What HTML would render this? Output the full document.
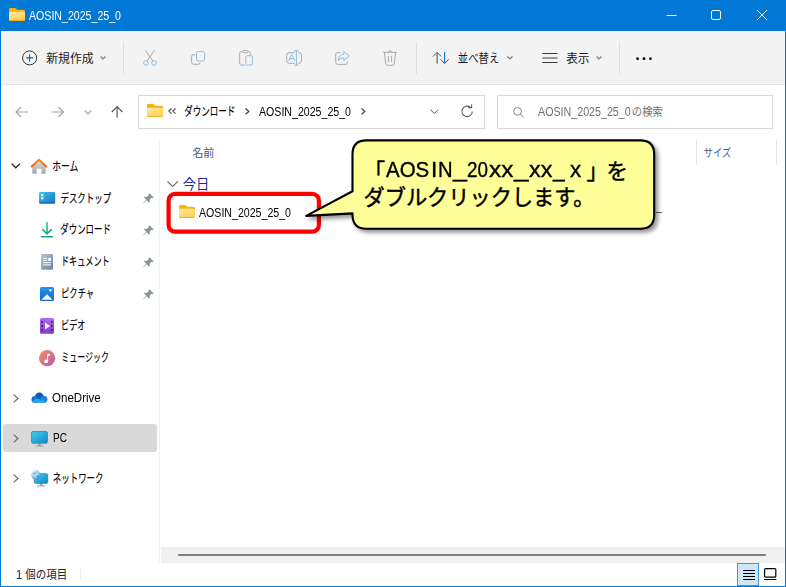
<!DOCTYPE html>
<html lang="ja"><head><meta charset="utf-8"><title>AOSIN_2025_25_0</title>
<style>
html,body{margin:0;padding:0;background:#fff;}
body{width:786px;height:587px;overflow:hidden;font-family:"Liberation Sans",sans-serif;font-size:12px;color:#000;}
#win{position:relative;width:786px;height:587px;overflow:hidden;background:#fff;}
#win *{box-sizing:border-box;}
.abs{position:absolute;}
#jp{position:absolute;left:0;top:0;pointer-events:none;}
#jp text{font-family:"Liberation Sans","Noto Sans CJK JP",sans-serif;white-space:pre;}
.t{position:absolute;white-space:nowrap;line-height:1;transform-origin:0 0;}
#titlebar{position:absolute;left:0;top:0;width:786px;height:31px;background:#0078d4;}
#bl{position:absolute;left:0;top:0;width:1px;height:587px;background:#0078d4;}
#br{position:absolute;left:785px;top:0;width:1px;height:587px;background:#0078d4;}
#bb{position:absolute;left:0;top:586px;width:786px;height:1px;background:#0078d4;}
#toolbar{position:absolute;left:1px;top:31px;width:784px;height:54px;background:#f3f3f3;border-bottom:1px solid #e3e3e3;}
.sep{position:absolute;width:1px;background:#dedede;top:42px;height:32px;}
.box{position:absolute;top:95px;height:34px;border:1px solid #d9d9d9;background:#fff;}
#sidediv{position:absolute;left:159px;top:140px;width:1px;height:423px;background:#f2f2f2;}
#pcsel{position:absolute;left:3px;top:424px;width:154px;height:28px;background:#d9d9d9;border-radius:2.5px;}
.colsep{position:absolute;top:140px;width:1px;height:25px;background:#e5e5e5;}
#redbox{position:absolute;left:166.5px;top:191.8px;width:154.5px;height:42px;border:4.2px solid #ff0000;border-radius:9px;}
#track{position:absolute;left:161px;top:547px;width:624px;height:16px;background:#f0f0f0;}
#thumb{position:absolute;left:178px;top:554px;width:588px;height:2px;background:#7f7f7f;border-radius:1px;}
#detbtn{position:absolute;left:737px;top:563px;width:22px;height:23px;background:#cfe6f7;border:1px solid #3a9ce0;}
svg.ic{position:absolute;overflow:visible;}

</style></head>
<body>
<div id="win">
<div id="titlebar"></div><div id="toolbar"></div><div id="bl"></div><div id="br"></div><div id="bb"></div><svg class="ic" style="left:9px;top:8px" width="16" height="13" viewBox="0 0 16 13"><defs><linearGradient id="f1" x1="0" y1="0" x2="0.6" y2="1"><stop offset="0" stop-color="#ffe9a6"/><stop offset="1" stop-color="#ffd052"/></linearGradient></defs>
<path d="M0 1.3Q0 0 1.3 0H5.8Q6.5 0 7 .5L8.4 1.8H14.7Q16 1.8 16 3.1V6H0Z" fill="#f6b30b"/>
<path d="M0 5Q0 3.8 1.2 3.8H14.8Q16 3.8 16 5V11.7Q16 13 14.7 13H1.3Q0 13 0 11.7Z" fill="url(#f1)"/>
<path d="M0 11.4V11.7Q0 13 1.3 13H14.7Q16 13 16 11.7V11.4Q16 12.3 14.7 12.3H1.3Q0 12.3 0 11.4Z" fill="#eaa714"/></svg><span class="t" style="left:29.3px;top:9.84px;font-size:12px;color:#fff;transform:scaleX(0.8839);">AOSIN_2025_25_0</span><svg class="ic" style="left:660px;top:5px" width="120" height="20" viewBox="0 0 120 20"><g fill="none" stroke="#fff" stroke-width="1">
<path d="M6.5 10.5H16.5"/>
<rect x="51.5" y="5.5" width="9" height="9" rx="1.5"/>
<path d="M97 5L107 15M107 5L97 15"/></g></svg><svg class="ic" style="left:22px;top:50px" width="16" height="16" viewBox="0 0 16 16"><circle cx="7.6" cy="7.9" r="7" fill="none" stroke="#333" stroke-width="1"/><path d="M7.6 4.4V11.4M4.1 7.9H11.1" stroke="#0067c0" stroke-width="1.1" fill="none"/></svg><svg class="ic" style="left:100px;top:56.3px" width="7" height="4" viewBox="0 0 7 4"><path d="M0.5 0.5L3 3L5.5 0.5" fill="none" stroke="#777" stroke-width="1.1"/></svg><div class="sep" style="left:123px"></div><div class="sep" style="left:416px"></div><div class="sep" style="left:619px"></div><svg class="ic" style="left:142px;top:50px" width="16" height="16" viewBox="0 0 16 16"><g fill="none" stroke-width="1"><path d="M3.2 0.2L10.8 11M12.6 0.2L5 11" stroke="#a9a9a9"/><circle cx="3.9" cy="13" r="2.3" stroke="#8cc0ea"/><circle cx="12" cy="13" r="2.3" stroke="#8cc0ea"/></g></svg><svg class="ic" style="left:190px;top:50px" width="16" height="16" viewBox="0 0 16 16"><g fill="none" stroke-width="1"><path d="M5 4.6H3.6Q1.6 4.6 1.6 6.6V12.3Q1.6 14.3 3.6 14.3H8Q10 14.3 10 12.6" stroke="#a9a9a9"/><rect x="6.5" y="1.5" width="8.1" height="9.6" rx="2" stroke="#8cc0ea"/></g></svg><svg class="ic" style="left:238px;top:50px" width="16" height="16" viewBox="0 0 16 16"><g fill="none" stroke-width="1"><path d="M7 15.1H3.7Q1.7 15.1 1.7 13.1V3.5Q1.7 1.5 3.7 1.5H4.5M10 1.5H10.9Q12.4 1.5 12.4 3.5V5" stroke="#a9a9a9"/><rect x="4.6" y="0.4" width="5.2" height="2.3" rx="1.1" stroke="#a9a9a9"/><rect x="7.8" y="5.7" width="6.6" height="9.4" rx="1.5" stroke="#8cc0ea"/></g></svg><svg class="ic" style="left:286px;top:50px" width="17" height="16" viewBox="0 0 17 16"><g fill="none" stroke-width="1"><path d="M8.6 2.6H3.2Q0.7 2.6 0.7 5.1V10.8Q0.7 13.3 3.2 13.3H8.6M12.2 2.6H13Q15.5 2.6 15.5 5.1V10.8Q15.5 13.3 13 13.3H12.2" stroke="#a9a9a9"/><path d="M8.4 0.6H12.4M8.4 15.3H12.4M10.4 0.6V15.3" stroke="#8cc0ea" stroke-width="1.1"/><path d="M2.7 10.8L5.7 4.3L8.7 10.8M3.8 8.6H7.6" stroke="#8cc0ea"/></g></svg><svg class="ic" style="left:334px;top:50px" width="16" height="16" viewBox="0 0 16 16"><g fill="none" stroke-width="1"><path d="M6.5 2.6H3.7Q1.7 2.6 1.7 4.6V12.4Q1.7 14.4 3.7 14.4H11.6Q13.6 14.4 13.6 12.4V11.6" stroke="#a9a9a9"/><path d="M9.8 1.5L15.3 6L9.8 10.4V7.9Q6.2 7.7 4.3 10.6Q4.7 4.5 9.8 4Z" stroke="#8cc0ea" stroke-linejoin="round"/></g></svg><svg class="ic" style="left:382px;top:50px" width="16" height="16" viewBox="0 0 16 16"><g fill="none" stroke-width="1" stroke="#a9a9a9"><path d="M1 2.3H15M6.6 2.1Q6.6 0.6 8 0.6Q9.4 0.6 9.4 2.1M2.4 2.5L3.7 13.8Q3.9 15.3 5.4 15.3H10.6Q12.1 15.3 12.3 13.8L13.6 2.5M6.4 6V12.2M9.6 6V12.2"/></g></svg><svg class="ic" style="left:433px;top:52px" width="17" height="12" viewBox="0 0 17 12"><g fill="none" stroke-width="1"><path d="M4.1 11.7V0.4M0 4.5L4.1 0.4L8.2 4.5" stroke="#4a4a4a"/><path d="M11.6 0V11.4M7.5 7.3L11.6 11.4L15.7 7.3" stroke="#0067c0"/></g></svg><svg class="ic" style="left:507.3px;top:56.3px" width="7" height="4" viewBox="0 0 7 4"><path d="M0.5 0.5L3 3L5.5 0.5" fill="none" stroke="#777" stroke-width="1.1"/></svg><svg class="ic" style="left:542px;top:53px" width="16" height="10" viewBox="0 0 16 10"><path d="M0.3 0.5H15.5M0.3 5H15.5M0.3 9.5H15.5" stroke="#3a3a3a" stroke-width="1" fill="none"/></svg><svg class="ic" style="left:596px;top:56.3px" width="7" height="4" viewBox="0 0 7 4"><path d="M0.5 0.5L3 3L5.5 0.5" fill="none" stroke="#777" stroke-width="1.1"/></svg><svg class="ic" style="left:635px;top:57px" width="18" height="4" viewBox="0 0 18 4"><circle cx="2.6" cy="1.7" r="1.4"/><circle cx="9" cy="1.7" r="1.4"/><circle cx="15.4" cy="1.7" r="1.4"/></svg><svg class="ic" style="left:15px;top:106px" width="14" height="12" viewBox="0 0 14 12"><path d="M13 6H1.2M6.2 0.8L1 6L6.2 11.2" fill="none" stroke="#a2a2a2" stroke-width="1.2"/></svg><svg class="ic" style="left:50.5px;top:106px" width="14" height="12" viewBox="0 0 14 12"><path d="M0.5 6H12.3M7.3 0.8L12.5 6L7.3 11.2" fill="none" stroke="#a2a2a2" stroke-width="1.2"/></svg><svg class="ic" style="left:83.5px;top:109.5px" width="9" height="5" viewBox="0 0 9 5"><path d="M0.5 0.5L4 4L7.5 0.5" fill="none" stroke="#a2a2a2" stroke-width="1.1"/></svg><svg class="ic" style="left:110.5px;top:106px" width="13" height="12" viewBox="0 0 13 12"><path d="M6.1 11.8V0.8M0.8 6L6.1 0.7L11.4 6" fill="none" stroke="#585858" stroke-width="1.2"/></svg><div class="box" style="left:138px;width:347px"></div><div class="box" style="left:497px;width:276px"></div><svg class="ic" style="left:147px;top:104px" width="16" height="13" viewBox="0 0 16 13"><defs><linearGradient id="f2" x1="0" y1="0" x2="0.6" y2="1"><stop offset="0" stop-color="#ffe9a6"/><stop offset="1" stop-color="#ffd052"/></linearGradient></defs>
<path d="M0 1.3Q0 0 1.3 0H5.8Q6.5 0 7 .5L8.4 1.8H14.7Q16 1.8 16 3.1V6H0Z" fill="#f6b30b"/>
<path d="M0 5Q0 3.8 1.2 3.8H14.8Q16 3.8 16 5V11.7Q16 13 14.7 13H1.3Q0 13 0 11.7Z" fill="url(#f2)"/>
<path d="M0 11.4V11.7Q0 13 1.3 13H14.7Q16 13 16 11.7V11.4Q16 12.3 14.7 12.3H1.3Q0 12.3 0 11.4Z" fill="#eaa714"/></svg><svg class="ic" style="left:168px;top:108.3px" width="9" height="7" viewBox="0 0 9 7"><path d="M3.5 0.5L0.8 3.1L3.5 5.7M7.5 0.5L4.8 3.1L7.5 5.7" fill="none" stroke="#444" stroke-width="1.1"/></svg><svg class="ic" style="left:245px;top:108px" width="6" height="8" viewBox="0 0 6 8"><path d="M0.6 0.5L3.8 3.4L0.6 6.3" fill="none" stroke="#3a3a3a" stroke-width="1.2"/></svg><span class="t" style="left:259.0px;top:105.84px;font-size:12px;color:#000;transform:scaleX(0.8839);">AOSIN_2025_25_0</span><svg class="ic" style="left:360.5px;top:108px" width="6" height="8" viewBox="0 0 6 8"><path d="M0.6 0.5L3.8 3.4L0.6 6.3" fill="none" stroke="#3a3a3a" stroke-width="1.2"/></svg><svg class="ic" style="left:429.5px;top:108.5px" width="9" height="6" viewBox="0 0 9 6"><path d="M0.5 0.6L4.3 4.6L8.1 0.6" fill="none" stroke="#5a5a5a" stroke-width="1"/></svg><svg class="ic" style="left:461px;top:104.5px" width="13" height="13" viewBox="0 0 13 13"><path d="M11.3 6.4A5.2 5.2 0 1 1 9.2 2.2" fill="none" stroke="#5a5a5a" stroke-width="1.1"/><path d="M7.2 2.6H10.6V-0.6" fill="none" stroke="#5a5a5a" stroke-width="1.1"/></svg><svg class="ic" style="left:512.5px;top:107px" width="11" height="11" viewBox="0 0 11 11"><circle cx="4.6" cy="4.4" r="3.9" fill="none" stroke="#8a8a8a" stroke-width="1"/><path d="M7.4 7.2L10.8 10.4" stroke="#8a8a8a" stroke-width="1"/></svg><span class="t" style="left:538px;top:105.94px;font-size:12px;color:#707070;transform:scaleX(0.8907);">AOSIN_2025_25_0</span><div id="sidediv"></div><div id="pcsel"></div><svg class="ic" style="left:10.5px;top:163px" width="10" height="6" viewBox="0 0 10 6"><path d="M0.6 0.6L4.8 4.8L9 0.6" fill="none" stroke="#222" stroke-width="1.3"/></svg><span class="t" style="left:52px;top:391.84px;font-size:12px;color:#000;transform:scaleX(0.9628);">OneDrive</span><span class="t" style="left:52.5px;top:431.84px;font-size:12px;color:#000;transform:scaleX(0.8398);">PC</span><svg class="ic" style="left:30px;top:158px" width="18" height="17" viewBox="0 0 18 17"><defs><linearGradient id="hg" x1="0" y1="0" x2="0" y2="1"><stop offset="0" stop-color="#dcdcdc"/><stop offset="1" stop-color="#a9a9a9"/></linearGradient>
<linearGradient id="hr" x1="0" y1="0" x2="0" y2="1"><stop offset="0" stop-color="#f58a1f"/><stop offset="1" stop-color="#e3601a"/></linearGradient></defs>
<path d="M2.2 8.2L9 2.6L15.8 8.2V14.6Q15.8 15.7 14.7 15.7H11.4V10.8H6.8V15.7H3.3Q2.2 15.7 2.2 14.6Z" fill="url(#hg)"/>
<path d="M1.7 8.5L9 1.7L16.3 8.5" fill="none" stroke="url(#hr)" stroke-width="1.9" stroke-linecap="round" stroke-linejoin="round"/></svg><svg class="ic" style="left:38.8px;top:192px" width="17" height="12" viewBox="0 0 17 12"><defs><linearGradient id="dg" x1="0" y1="0" x2="1" y2="1"><stop offset="0" stop-color="#3ccbee"/><stop offset="1" stop-color="#166fc4"/></linearGradient></defs>
<rect x="0" y="0" width="16.2" height="11.6" rx="1.3" fill="url(#dg)"/><rect x="0.4" y="10.6" width="15.4" height="1" rx="0.5" fill="#0f5fa8"/>
<rect x="2.1" y="2" width="2.3" height="2.2" fill="#fff"/><rect x="2.1" y="5.2" width="2.3" height="2.2" fill="#fff"/></svg><svg class="ic" style="left:40px;top:222px" width="14" height="16" viewBox="0 0 14 16"><defs><linearGradient id="dl" x1="0" y1="0" x2="0" y2="1"><stop offset="0" stop-color="#33c481"/><stop offset="1" stop-color="#17a08f"/></linearGradient></defs>
<path d="M7 0.6V11.6M2.7 7.6L7 11.9L11.3 7.6M1.5 14.8H12.4" fill="none" stroke="url(#dl)" stroke-width="1.6" stroke-linecap="round" stroke-linejoin="round"/></svg><svg class="ic" style="left:40.9px;top:254px" width="12" height="16" viewBox="0 0 12 16"><defs><linearGradient id="dc" x1="0" y1="0" x2="1" y2="1"><stop offset="0" stop-color="#b4c5dc"/><stop offset="1" stop-color="#6784aa"/></linearGradient></defs>
<rect x="0" y="0" width="12" height="15.8" rx="1.2" fill="url(#dc)"/>
<path d="M2.3 4.4H6M2.3 6.5H6M2.3 8.7H9.9M2.3 10.9H9.9" stroke="#fff" stroke-width="1" fill="none"/><rect x="7.3" y="3.9" width="2.6" height="3.1" fill="#fff"/></svg><svg class="ic" style="left:40px;top:287px" width="14" height="14" viewBox="0 0 14 14"><defs><linearGradient id="pg" x1="0" y1="0" x2="0" y2="1"><stop offset="0" stop-color="#2196e8"/><stop offset="1" stop-color="#1565cf"/></linearGradient></defs>
<rect x="0" y="0" width="14" height="14" rx="1.5" fill="url(#pg)"/><path d="M1.4 12.8L7 7.2L12.6 12.8Z" fill="#fff"/><circle cx="10.4" cy="3.3" r="1.2" fill="#fff"/></svg><svg class="ic" style="left:40px;top:318px" width="14" height="16" viewBox="0 0 14 16"><defs><linearGradient id="vg" x1="0" y1="0" x2="0" y2="1"><stop offset="0" stop-color="#ae6cf0"/><stop offset="1" stop-color="#8438cc"/></linearGradient></defs>
<rect x="0" y="0" width="14" height="15.8" rx="1.5" fill="url(#vg)"/><path d="M5 4.4V11.6L10.2 8Z" fill="#f2f2f2"/>
<g fill="#3b1f66"><rect x="1.3" y="3.2" width="1.7" height="1.7"/><rect x="1.3" y="7.1" width="1.7" height="1.7"/><rect x="1.3" y="11" width="1.7" height="1.7"/><rect x="11" y="3.2" width="1.7" height="1.7"/><rect x="11" y="7.1" width="1.7" height="1.7"/><rect x="11" y="11" width="1.7" height="1.7"/></g></svg><svg class="ic" style="left:39px;top:349.6px" width="17" height="17" viewBox="0 0 17 17"><defs><linearGradient id="mg" x1="0" y1="0" x2="1" y2="1"><stop offset="0" stop-color="#f5915a"/><stop offset="1" stop-color="#b25ab8"/></linearGradient></defs>
<circle cx="8.1" cy="8.2" r="8.1" fill="url(#mg)"/><path d="M8.2 4.2L11 3.4V5.4L9.1 6V11.2A1.9 1.7 0 1 1 8.2 9.9Z" fill="#fff"/></svg><svg class="ic" style="left:30.5px;top:392px" width="17" height="11" viewBox="0 0 17 11"><circle cx="8.3" cy="4.9" r="4.3" fill="#0b5cb0"/><circle cx="3.9" cy="7.4" r="3.4" fill="#1273d0"/><circle cx="12.9" cy="7.3" r="3.5" fill="#1a86de"/>
<path d="M1.2 9.4Q3.4 6.4 7.4 6.9Q10 7.3 12.6 9.2L15.6 9.6Q14.7 10.8 13.2 10.8H3.8Q2 10.8 1.2 9.4Z" fill="#2ba6ec"/><rect x="3.8" y="8.6" width="9.4" height="2.2" fill="#2ba6ec"/></svg><svg class="ic" style="left:30.5px;top:430.5px" width="17" height="16" viewBox="0 0 17 16"><defs><linearGradient id="cg" x1="0" y1="0" x2="1" y2="1"><stop offset="0" stop-color="#3fd2ee"/><stop offset="1" stop-color="#1584c6"/></linearGradient></defs>
<rect x="7.3" y="12" width="2.4" height="3" fill="#9a9a9a"/><rect x="4.4" y="14.6" width="8.2" height="1" rx="0.5" fill="#9a9a9a"/>
<rect x="0.6" y="0.6" width="15.8" height="11.6" rx="1.4" fill="url(#cg)" stroke="#1b86b8" stroke-width="0.8"/></svg><svg class="ic" style="left:30.5px;top:469.5px" width="17" height="17" viewBox="0 0 17 17"><defs><linearGradient id="ng" x1="0" y1="0" x2="1" y2="1"><stop offset="0" stop-color="#3fd2ee"/><stop offset="1" stop-color="#1584c6"/></linearGradient>
<radialGradient id="gg" cx="0.35" cy="0.3" r="0.8"><stop offset="0" stop-color="#f2fbff"/><stop offset="0.55" stop-color="#8ecbee"/><stop offset="1" stop-color="#2e86c8"/></radialGradient></defs>
<rect x="9.2" y="13" width="2.2" height="2.8" fill="#9a9a9a"/><rect x="6" y="15.4" width="8.4" height="1" rx="0.5" fill="#9a9a9a"/>
<rect x="3.3" y="3.7" width="13.4" height="9.6" rx="1.2" fill="url(#ng)" stroke="#1b86b8" stroke-width="0.8"/>
<circle cx="4.9" cy="4.9" r="4.6" fill="url(#gg)"/><path d="M2 3.2Q3.6 1.6 5.4 2.4Q4.8 4.4 3 4.8ZM5.6 5.6Q7.6 5 8.6 6.6Q7.4 8.6 5.8 8Z" fill="#3a94d2" opacity="0.8"/></svg><svg class="ic" style="left:13px;top:394px" width="6" height="9" viewBox="0 0 6 9"><path d="M0.7 0.6L4.9 4.5L0.7 8.4" fill="none" stroke="#6b6b6b" stroke-width="1.2"/></svg><svg class="ic" style="left:13px;top:434px" width="6" height="9" viewBox="0 0 6 9"><path d="M0.7 0.6L4.9 4.5L0.7 8.4" fill="none" stroke="#6b6b6b" stroke-width="1.2"/></svg><svg class="ic" style="left:13px;top:474px" width="6" height="9" viewBox="0 0 6 9"><path d="M0.7 0.6L4.9 4.5L0.7 8.4" fill="none" stroke="#6b6b6b" stroke-width="1.2"/></svg><svg class="ic" style="left:143.4px;top:192.9px" width="11" height="11" viewBox="0 0 11 11"><path d="M6.3 0.2L10.7 4.6L9.4 5.2L8.2 5L6.6 7L6.9 8.9L6 9.6L3.6 7.2L0.6 10.3L0.2 9.9L3.2 6.8L0.9 4.5L1.7 3.7L3.6 4L5.6 2.4L5.4 1.2Z" fill="#8a969e"/></svg><svg class="ic" style="left:143.4px;top:224.9px" width="11" height="11" viewBox="0 0 11 11"><path d="M6.3 0.2L10.7 4.6L9.4 5.2L8.2 5L6.6 7L6.9 8.9L6 9.6L3.6 7.2L0.6 10.3L0.2 9.9L3.2 6.8L0.9 4.5L1.7 3.7L3.6 4L5.6 2.4L5.4 1.2Z" fill="#8a969e"/></svg><svg class="ic" style="left:143.4px;top:256.9px" width="11" height="11" viewBox="0 0 11 11"><path d="M6.3 0.2L10.7 4.6L9.4 5.2L8.2 5L6.6 7L6.9 8.9L6 9.6L3.6 7.2L0.6 10.3L0.2 9.9L3.2 6.8L0.9 4.5L1.7 3.7L3.6 4L5.6 2.4L5.4 1.2Z" fill="#8a969e"/></svg><svg class="ic" style="left:143.4px;top:288.9px" width="11" height="11" viewBox="0 0 11 11"><path d="M6.3 0.2L10.7 4.6L9.4 5.2L8.2 5L6.6 7L6.9 8.9L6 9.6L3.6 7.2L0.6 10.3L0.2 9.9L3.2 6.8L0.9 4.5L1.7 3.7L3.6 4L5.6 2.4L5.4 1.2Z" fill="#8a969e"/></svg><div class="colsep" style="left:696px"></div><div class="colsep" style="left:776px"></div><svg class="ic" style="left:167px;top:180.6px" width="12" height="7" viewBox="0 0 12 7"><path d="M0.5 0.5L5.6 5.4L10.7 0.5" fill="none" stroke="#6e6e6e" stroke-width="1.1"/></svg><svg class="ic" style="left:179px;top:205px" width="16" height="13" viewBox="0 0 16 13"><defs><linearGradient id="f3" x1="0" y1="0" x2="0.6" y2="1"><stop offset="0" stop-color="#ffe9a6"/><stop offset="1" stop-color="#ffd052"/></linearGradient></defs>
<path d="M0 1.3Q0 0 1.3 0H5.8Q6.5 0 7 .5L8.4 1.8H14.7Q16 1.8 16 3.1V6H0Z" fill="#f6b30b"/>
<path d="M0 5Q0 3.8 1.2 3.8H14.8Q16 3.8 16 5V11.7Q16 13 14.7 13H1.3Q0 13 0 11.7Z" fill="url(#f3)"/>
<path d="M0 11.4V11.7Q0 13 1.3 13H14.7Q16 13 16 11.7V11.4Q16 12.3 14.7 12.3H1.3Q0 12.3 0 11.4Z" fill="#eaa714"/></svg><span class="t" style="left:199px;top:207.14px;font-size:12px;color:#000;transform:scaleX(0.8839);">AOSIN_2025_25_0</span><div class="abs" style="left:656px;top:212px;width:6px;height:1px;background:#666"></div><svg class="ic" style="left:0px;top:0px" width="786" height="587" viewBox="0 0 786 587"><rect x="168.6" y="193.9" width="150.3" height="37.8" rx="6.5" fill="none" stroke="#ff0000" stroke-width="4.2"/></svg><svg class="ic" style="left:0;top:0" width="786" height="587" viewBox="0 0 786 587">
<defs><filter id="sh" x="-10%" y="-20%" width="125%" height="150%"><feGaussianBlur stdDeviation="1.9"/></filter></defs>
<path d="M366.5 140.4H640.2Q654.2 140.4 654.2 154.4V214.7Q654.2 228.7 640.2 228.7H366.5Q352.5 228.7 352.5 214.7V213.4L306.2 215.9L352.5 191.3V154.4Q352.5 140.4 366.5 140.4Z" transform="translate(3,3)" fill="#000" stroke="#000" stroke-width="2" opacity="0.42" filter="url(#sh)"/>
<path d="M366.5 140.4H640.2Q654.2 140.4 654.2 154.4V214.7Q654.2 228.7 640.2 228.7H366.5Q352.5 228.7 352.5 214.7V213.4L306.2 215.9L352.5 191.3V154.4Q352.5 140.4 366.5 140.4Z" fill="#ffff99" stroke="#000" stroke-width="2.1" stroke-linejoin="round"/>
</svg><span class="t" style="left:386.0px;top:160.44px;font-size:21.33px;color:#000;transform:scaleX(0.9590);-webkit-text-stroke:0.35px #000;">AOS</span><span class="t" style="left:430.6px;top:160.44px;font-size:21.33px;color:#000;transform:scaleX(1.0631);-webkit-text-stroke:0.35px #000;">I</span><span class="t" style="left:437.9px;top:160.44px;font-size:21.33px;color:#000;transform:scaleX(0.9478);-webkit-text-stroke:0.35px #000;">N</span><span class="t" style="left:453px;top:160.44px;font-size:21.33px;color:#000;transform:scaleX(1.1717);-webkit-text-stroke:0.35px #000;">_</span><span class="t" style="left:467.0px;top:160.44px;font-size:21.33px;color:#000;transform:scaleX(0.8851);-webkit-text-stroke:0.35px #000;">20</span><span class="t" style="left:488.7px;top:160.44px;font-size:21.33px;color:#000;transform:scaleX(1.1392);-webkit-text-stroke:0.35px #000;">xx</span><span class="t" style="left:514.4px;top:160.44px;font-size:21.33px;color:#000;transform:scaleX(1.2223);-webkit-text-stroke:0.35px #000;">_</span><span class="t" style="left:529.4px;top:160.44px;font-size:21.33px;color:#000;transform:scaleX(1.0970);-webkit-text-stroke:0.35px #000;">xx</span><span class="t" style="left:553px;top:160.44px;font-size:21.33px;color:#000;transform:scaleX(0.9863);-webkit-text-stroke:0.35px #000;">_</span><span class="t" style="left:569.8px;top:160.44px;font-size:21.33px;color:#000;transform:scaleX(1.0502);-webkit-text-stroke:0.35px #000;">x</span><div id="track"></div><div id="thumb"></div><span class="t" style="left:15.6px;top:568.84px;font-size:12px;color:#1c2430;transform:scaleX(0.9290);">1</span><div class="abs" style="left:80px;top:569px;width:1px;height:11px;background:#ececec"></div><div id="detbtn"></div><svg class="ic" style="left:743px;top:570px" width="12" height="10" viewBox="0 0 12 10"><path d="M0 0.5H12M0 3.5H12M0 6.5H12M0 9.5H12" stroke="#000" stroke-width="1" fill="none"/></svg><svg class="ic" style="left:764px;top:568px" width="13" height="12" viewBox="0 0 13 12"><rect x="0.6" y="0.6" width="11.2" height="8.6" rx="1" fill="none" stroke="#000" stroke-width="1.2"/><path d="M0 11.5H12.4" stroke="#000" stroke-width="1"/></svg>
<svg id="jp" width="786" height="587" viewBox="0 0 786 587">
<text x="46.2" y="63.3" font-size="12" fill="#1a1a1a" textLength="47.4" lengthAdjust="spacingAndGlyphs">新規作成</text>
<text x="457.8" y="63.3" font-size="12" fill="#1a1a1a" textLength="41.5" lengthAdjust="spacingAndGlyphs">並べ替え</text>
<text x="566.2" y="63.3" font-size="12" fill="#1a1a1a" textLength="23.3" lengthAdjust="spacingAndGlyphs">表示</text>
<text x="184.3" y="116.2" font-size="12" fill="#000" stroke="#000" stroke-width="0.15" textLength="51" lengthAdjust="spacingAndGlyphs">ダウンロード</text>
<text x="631.8" y="116.2" font-size="11.5" fill="#707070" textLength="31.2" lengthAdjust="spacingAndGlyphs">の検索</text>
<text x="52.2" y="170.5" font-size="12" fill="#000" stroke="#000" stroke-width="0.15" textLength="26.2" lengthAdjust="spacingAndGlyphs">ホーム</text>
<text x="60.5" y="202.5" font-size="12" fill="#000" stroke="#000" stroke-width="0.15" textLength="50.6" lengthAdjust="spacingAndGlyphs">デスクトップ</text>
<text x="60.3" y="234.4" font-size="12" fill="#000" stroke="#000" stroke-width="0.15" textLength="50.6" lengthAdjust="spacingAndGlyphs">ダウンロード</text>
<text x="61" y="266.2" font-size="12" fill="#000" stroke="#000" stroke-width="0.15" textLength="48.6" lengthAdjust="spacingAndGlyphs">ドキュメント</text>
<text x="61" y="298.2" font-size="12" fill="#000" stroke="#000" stroke-width="0.15" textLength="33.2" lengthAdjust="spacingAndGlyphs">ピクチャ</text>
<text x="61" y="330.2" font-size="12" fill="#000" stroke="#000" stroke-width="0.15" textLength="24.4" lengthAdjust="spacingAndGlyphs">ビデオ</text>
<text x="61.2" y="362.2" font-size="12" fill="#000" stroke="#000" stroke-width="0.15" textLength="47.7" lengthAdjust="spacingAndGlyphs">ミュージック</text>
<text x="52.8" y="483" font-size="12" fill="#000" stroke="#000" stroke-width="0.15" textLength="50.7" lengthAdjust="spacingAndGlyphs">ネットワーク</text>
<text x="192.2" y="157.3" font-size="11" fill="#44587a" textLength="22.2" lengthAdjust="spacingAndGlyphs">名前</text>
<text x="703.8" y="157.3" font-size="11" fill="#44587a" textLength="27.3" lengthAdjust="spacingAndGlyphs">サイズ</text>
<text x="182.7" y="189.3" font-size="13.3" fill="#1a2e96" textLength="26.6" lengthAdjust="spacingAndGlyphs">今日</text>
<text x="385" y="178.5" font-size="21.33" fill="#000" stroke="#000" stroke-width="0.45" text-anchor="end">「</text>
<text x="586.5" y="178.5" font-size="21.33" fill="#000" stroke="#000" stroke-width="0.45">」</text>
<text x="606.5" y="178.5" font-size="21.33" fill="#000" stroke="#000" stroke-width="0.45">を</text>
<text x="363.5" y="205.2" font-size="21.33" fill="#000" stroke="#000" stroke-width="0.45" textLength="231" lengthAdjust="spacingAndGlyphs">ダブルクリックします。</text>
<text x="25.2" y="579.2" font-size="12" fill="#1c2430" textLength="42" lengthAdjust="spacingAndGlyphs">個の項目</text>
</svg>
</div>
</body></html>
